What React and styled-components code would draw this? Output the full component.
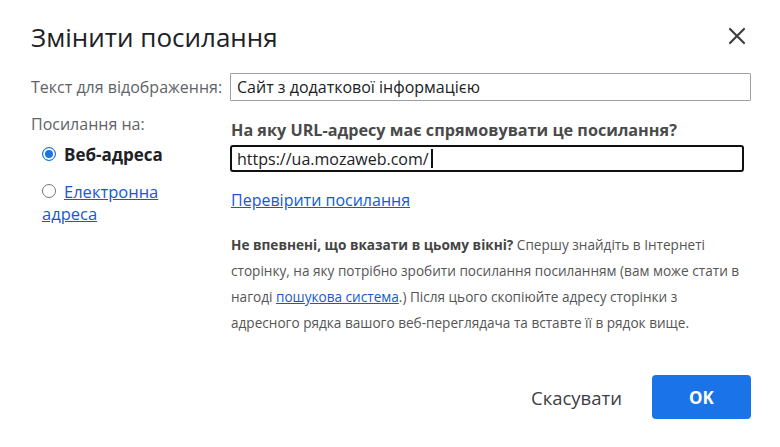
import React from "react";
import styled, { createGlobalStyle } from "styled-components";

const Global = createGlobalStyle`
  html, body {
    margin: 0;
    padding: 0;
    background: #fff;
  }
  body {
    font-family: "Open Sans", "Liberation Sans", sans-serif;
    color: #222;
  }
`;

const Dialog = styled.div`
  width: 780px;
  height: 447px;
  box-sizing: border-box;
  padding: 18px 29px 0 31px;
  display: flex;
  flex-direction: column;
`;

const TitleBar = styled.div`
  display: flex;
  align-items: center;
  justify-content: space-between;
  height: 38px;
`;

const Title = styled.h1`
  margin: 0;
  font-size: 26px;
  font-weight: 400;
  color: #202124;
`;

const Close = styled.button`
  border: 0;
  background: none;
  padding: 0;
  width: 24px;
  height: 24px;
  display: flex;
  align-items: center;
  justify-content: center;
  margin: -3px 2px 0 0;
  cursor: pointer;
`;

const Grid = styled.div`
  display: grid;
  grid-template-columns: 199px 1fr;
  margin-top: 17px;
`;

const Label = styled.div`
  font-size: 16px;
  color: #5f6368;
  line-height: 28px;
  white-space: nowrap;
`;

const TextInput = styled.div`
  box-sizing: border-box;
  width: ${(p) => p.$width}px;
  height: ${(p) => (p.$focused ? 27 : 28)}px;
  border: ${(p) => (p.$focused ? "2px solid #111" : "1px solid #9aa0a6")};
  border-radius: ${(p) => (p.$focused ? 3 : 1)}px;
  padding: 0 ${(p) => (p.$focused ? 5 : 6)}px;
  display: flex;
  align-items: center;
  font-size: 16px;
  color: #202124;
  white-space: nowrap;
`;

const Caret = styled.span`
  display: inline-block;
  width: 2px;
  height: 19px;
  margin-left: 2px;
  background: #111;
`;

const LeftCol = styled.div`
  padding-top: 9px;
`;

const RadioRow = styled.label`
  display: flex;
  align-items: flex-start;
  gap: 8px;
  padding-left: 11px;
  margin-top: ${(p) => p.$top}px;
  font-size: 16.5px;
  line-height: 22px;
`;

const Radio = styled.span`
  flex: none;
  box-sizing: border-box;
  width: 14px;
  height: 14px;
  margin-top: 3px;
  border-radius: 50%;
  border: 1px solid ${(p) => (p.$on ? "#1a73e8" : "#767676")};
  background: ${(p) => (p.$on ? "#1a73e8" : "#fff")};
  box-shadow: ${(p) => (p.$on ? "inset 0 0 0 2px #fff" : "none")};
`;

const RadioText = styled.span`
  font-weight: ${(p) => (p.$bold ? 700 : 400)};
  font-size: ${(p) => (p.$bold ? 17 : 16.5)}px;
  color: ${(p) => (p.$link ? "#1558d6" : "#202124")};
  text-decoration: ${(p) => (p.$link ? "underline" : "none")};
  margin-left: ${(p) => (p.$hang ? -22 : 0)}px;
`;

const RightCol = styled.div`
  display: flex;
  flex-direction: column;
  padding-top: 19px;
`;

const Question = styled.div`
  font-size: 16.2px;
  font-weight: 700;
  color: #4a4a4a;
  line-height: 20px;
  padding-left: 1px;
  margin-bottom: 5px;
  white-space: nowrap;
`;

const CheckLink = styled.a`
  margin-top: 17px;
  padding-left: 1px;
  font-size: 16px;
  color: #1558d6;
  text-decoration: underline;
  align-self: flex-start;
`;

const Help = styled.p`
  margin: 21px 0 0;
  padding-left: 1px;
  font-size: 13.6px;
  line-height: 26px;
  color: #555;
  white-space: nowrap;

  b {
    color: #444;
    font-weight: 700;
  }
  a {
    color: #1558d6;
    text-decoration: underline;
  }
`;

const Footer = styled.div`
  display: flex;
  justify-content: flex-end;
  align-items: center;
  gap: 30px;
  margin-top: auto;
  margin-bottom: 28px;
`;

const Button = styled.button`
  font-family: inherit;
  border-radius: 4px;
  height: 44px;
  font-size: ${(p) => (p.$primary ? 17 : 18.5)}px;
  font-weight: ${(p) => (p.$primary ? 700 : 400)};
  border: 0;
  cursor: pointer;
  background: ${(p) => (p.$primary ? "#1a73e8" : "transparent")};
  color: ${(p) => (p.$primary ? "#fff" : "#3c4043")};
  width: ${(p) => (p.$primary ? "99px" : "auto")};
  padding: 0;
`;

export default function App() {
  return (
    <>
      <Global />
      <Dialog>
        <TitleBar>
          <Title>Змінити посилання</Title>
          <Close aria-label="Закрити">
            <svg width="18" height="18" viewBox="0 0 18 18">
              <path d="M2 2 L16 16 M16 2 L2 16" stroke="#3c4043" strokeWidth="2.2" strokeLinecap="round" />
            </svg>
          </Close>
        </TitleBar>
        <Grid>
          <Label>Текст для відображення:</Label>
          <TextInput $width={521}>Сайт з додаткової інформацією</TextInput>
          <LeftCol>
            <Label>Посилання на:</Label>
            <RadioRow $top={6}>
              <Radio $on />
              <RadioText $bold>Веб-адреса</RadioText>
            </RadioRow>
            <RadioRow $top={15}>
              <Radio />
              <span>
                <RadioText $link>Електронна</RadioText>
                <br />
                <RadioText $link $hang>адреса</RadioText>
              </span>
            </RadioRow>
          </LeftCol>
          <RightCol>
            <Question>На яку URL-адресу має спрямовувати це посилання?</Question>
            <TextInput $focused $width={514}>
              https://ua.mozaweb.com/
              <Caret />
            </TextInput>
            <CheckLink href="#">Перевірити посилання</CheckLink>
            <Help>
              <b>Не впевнені, що вказати в цьому вікні?</b> Спершу знайдіть в Інтернеті
              <br />
              сторінку, на яку потрібно зробити посилання посиланням (вам може стати в
              <br />
              нагоді <a href="#">пошукова система</a>.) Після цього скопіюйте адресу сторінки з
              <br />
              адресного рядка вашого веб-переглядача та вставте її в рядок вище.
            </Help>
          </RightCol>
        </Grid>
        <Footer>
          <Button>Скасувати</Button>
          <Button $primary>OK</Button>
        </Footer>
      </Dialog>
    </>
  );
}
